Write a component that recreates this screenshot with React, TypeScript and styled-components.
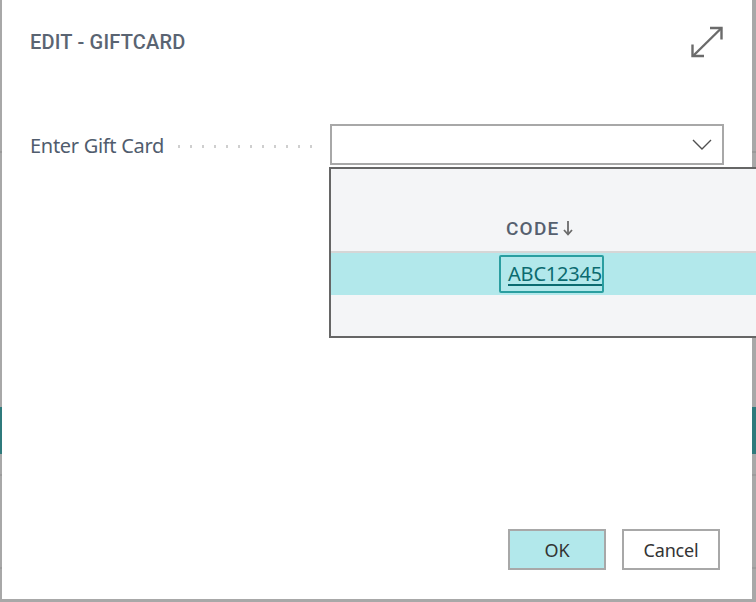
import React from "react";
import styled, { createGlobalStyle } from "styled-components";

const Global = createGlobalStyle`
  html, body {
    margin: 0;
    padding: 0;
    overflow: hidden;
    width: 756px;
    height: 602px;
  }
  body {
    font-family: "Noto Sans", "Open Sans", sans-serif;
  }
`;

const Backdrop = styled.div`
  width: 756px;
  height: 602px;
  box-sizing: border-box;
  padding: 0 4px 3px 2px;
  display: flex;
  background:
    linear-gradient(to bottom,
      transparent 0, transparent 151px,
      #9a9a9a 151px, #9a9a9a 153px,
      transparent 153px, transparent 407px,
      #2f7a7c 407px, #2f7a7c 454px,
      transparent 454px, transparent 474px,
      #9c9c9c 474px, #9c9c9c 476px,
      transparent 476px, transparent 567px,
      #9c9c9c 567px, #9c9c9c 569px,
      transparent 569px),
    #a8a8a8;
`;

const Dialog = styled.div`
  position: relative;
  flex: 1;
  background: #ffffff;
  display: flex;
  flex-direction: column;
  padding: 0 28px 29px 28px;
  box-sizing: border-box;
`;

const Header = styled.div`
  display: flex;
  align-items: center;
  justify-content: space-between;
  height: 83px;
`;

const Title = styled.h1`
  margin: 0;
  font-family: Roboto, "Noto Sans", sans-serif;
  font-weight: 500;
  font-size: 20px;
  letter-spacing: 0.2px;
  color: #5a6472;
  text-transform: uppercase;
  -webkit-font-smoothing: antialiased;
`;

const IconButton = styled.button`
  border: 0;
  background: transparent;
  padding: 0;
  display: flex;
  width: 34px;
  height: 34px;
  align-items: center;
  justify-content: center;
  cursor: pointer;
`;

const FieldRow = styled.div`
  display: flex;
  align-items: center;
  margin-top: 41px;
  height: 41px;
`;

const Label = styled.label`
  display: flex;
  align-items: center;
  width: 300px;
  font-size: 20px;
  letter-spacing: -0.3px;
  color: #505c6d;
  white-space: nowrap;
  padding-top: 2px;
`;

const Leader = styled.span`
  flex: 1;
  height: 3px;
  margin: 1px 8px 0 9px;
  background-image: radial-gradient(circle, #cfcfcf 1.2px, transparent 1.5px);
  background-size: 12px 3px;
  background-repeat: repeat-x;
  background-position: 0 0;
`;

const SelectWrap = styled.div`
  position: relative;
  flex: 1;
  height: 41px;
`;

const SelectBox = styled.div`
  height: 100%;
  box-sizing: border-box;
  border: 2px solid #a8a8a8;
  background: #fff;
  display: flex;
  align-items: center;
  justify-content: flex-end;
  padding-right: 10px;
`;

const Popup = styled.div`
  position: absolute;
  left: -1px;
  top: 43px;
  width: 440px;
  height: 171px;
  box-sizing: border-box;
  border: 2px solid #666666;
  background: #f4f5f7;
  display: flex;
  flex-direction: column;
  z-index: 2;
`;

const PopupHead = styled.div`
  height: 85px;
  box-sizing: border-box;
  border-bottom: 2px solid #d6d6d6;
  display: flex;
  align-items: flex-end;
  padding: 0 0 11px 175px;
`;

const ColHeader = styled.span`
  font-family: Roboto, "Noto Sans", sans-serif;
  font-weight: 500;
  font-size: 19px;
  letter-spacing: 1.2px;
  color: #56606f;
  display: flex;
  align-items: center;
  gap: 4px;
  -webkit-font-smoothing: antialiased;
`;

const Row = styled.div<{ $selected?: boolean }>`
  height: 42px;
  background: ${(p) => (p.$selected ? "#b2e8eb" : "transparent")};
  display: flex;
  align-items: center;
  padding-left: 168px;
`;

const CodeLink = styled.a`
  box-sizing: border-box;
  height: 38px;
  display: flex;
  align-items: center;
  padding: 0 0 0 7px;
  width: 105px;
  border: 2px solid #2a9ea0;
  border-radius: 2px;
  font-size: 20px;
  letter-spacing: -0.2px;
  color: #0b6b70;
  text-decoration: underline;
  text-underline-offset: 3px;
  text-decoration-thickness: 2px;
  cursor: pointer;
`;

const Spacer = styled.div`
  flex: 1;
`;

const Footer = styled.div`
  display: flex;
  justify-content: flex-end;
  gap: 16px;
  padding-right: 4px;
`;

const Button = styled.button<{ $primary?: boolean }>`
  width: 98px;
  height: 41px;
  box-sizing: border-box;
  border: 2px solid #a8a8a8;
  background: ${(p) => (p.$primary ? "#b2e8eb" : "#ffffff")};
  font-family: "Noto Sans", "Open Sans", sans-serif;
  font-size: 18px;
  letter-spacing: -0.2px;
  color: #333333;
  cursor: pointer;
  padding: 0;
`;

const ExpandIcon = () => (
  <svg width="32" height="32" viewBox="0 0 32 32" fill="none">
    <g stroke="#6b6b6b" strokeWidth="2.4" strokeLinecap="butt" strokeLinejoin="miter">
      <polyline points="19,2 30.5,2 30.5,13.5" />
      <polyline points="1.5,18.5 1.5,30 13,30" />
      <line x1="2" y1="30" x2="30.5" y2="2" />
    </g>
  </svg>
);

const Chevron = () => (
  <svg width="20" height="11" viewBox="0 0 20 11" fill="none">
    <polyline points="1,1 10,10 19,1" stroke="#505050" strokeWidth="1.4" />
  </svg>
);

const SortArrow = () => (
  <svg width="10" height="15" viewBox="0 0 10 15" fill="none">
    <g stroke="#6b6b6b" strokeWidth="1.8">
      <line x1="5" y1="0" x2="5" y2="13" />
      <polyline points="1,9 5,13.5 9,9" />
    </g>
  </svg>
);

export default function App() {
  return (
    <>
      <Global />
      <Backdrop>
        <Dialog>
          <Header>
            <Title>Edit - GiftCard</Title>
            <IconButton aria-label="Expand">
              <ExpandIcon />
            </IconButton>
          </Header>
          <FieldRow>
            <Label>
              Enter Gift Card
              <Leader />
            </Label>
            <SelectWrap>
              <SelectBox>
                <Chevron />
              </SelectBox>
              <Popup>
                <PopupHead>
                  <ColHeader>
                    CODE
                    <SortArrow />
                  </ColHeader>
                </PopupHead>
                <Row $selected>
                  <CodeLink>ABC12345</CodeLink>
                </Row>
                <Row />
              </Popup>
            </SelectWrap>
          </FieldRow>
          <Spacer />
          <Footer>
            <Button $primary>OK</Button>
            <Button>Cancel</Button>
          </Footer>
        </Dialog>
      </Backdrop>
    </>
  );
}
